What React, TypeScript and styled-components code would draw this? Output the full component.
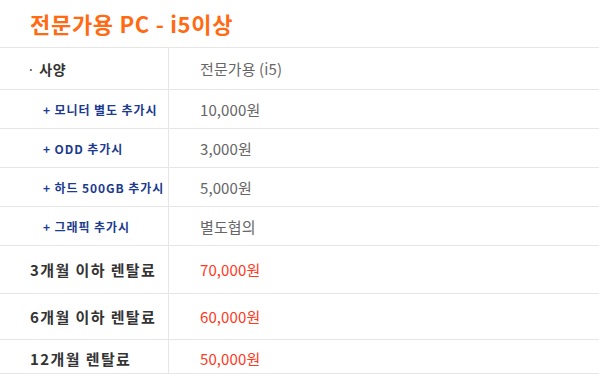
import React from 'react'
import styled, { createGlobalStyle } from 'styled-components'

const GlobalStyle = createGlobalStyle`
    body {
        margin: 0;
        background: #ffffff;
        font-family: "Noto Sans CJK KR", "Noto Sans", sans-serif;
    }
`

type Tone = 'spec' | 'option' | 'rent'

type Item = {
    label: string
    value: string
    tone: Tone
    height: number
}

const items: Item[] = [
    { label: '사양', value: '전문가용 (i5)', tone: 'spec', height: 41 },
    { label: '+ 모니터 별도 추가시', value: '10,000원', tone: 'option', height: 38 },
    { label: '+ ODD 추가시', value: '3,000원', tone: 'option', height: 38 },
    { label: '+ 하드 500GB 추가시', value: '5,000원', tone: 'option', height: 38 },
    { label: '+ 그래픽 추가시', value: '별도협의', tone: 'option', height: 38 },
    { label: '3개월 이하 렌탈료', value: '70,000원', tone: 'rent', height: 47 },
    { label: '6개월 이하 렌탈료', value: '60,000원', tone: 'rent', height: 45 },
    { label: '12개월 렌탈료', value: '50,000원', tone: 'rent', height: 33 },
]

export default function App(): JSX.Element {
    return (
        <Page>
            <GlobalStyle />
            <Title>전문가용 PC - i5이상</Title>
            <Table>
                {items.map(item => (
                    <Row key={item.label} style={{ height: item.height }}>
                        <Label tone={item.tone}>
                            {item.tone === 'spec' && <Dot>·</Dot>}
                            {item.label}
                        </Label>
                        <Value tone={item.tone}>{item.value}</Value>
                    </Row>
                ))}
            </Table>
        </Page>
    )
}

const Page = styled.div`
    width: 610px;
    height: 380px;
    overflow: hidden;
`

const Title = styled.h1`
    margin: 0;
    padding: 8px 0 0 30px;
    height: 38px;
    box-sizing: border-box;
    font-size: 22px;
    line-height: 30px;
    font-weight: bold;
    color: #ff6a12;
    letter-spacing: 0.7px;
`

const Table = styled.div`
    width: 599px;
    margin-top: 9px;
    border-top: 1px solid #e6e6e6;
`

const Row = styled.div`
    display: grid;
    grid-template-columns: 169px 1fr;
    border-bottom: 1px solid #e6e6e6;

    &:last-child > div {
        padding-top: 4px;
    }
`

const Label = styled.div<{ tone: Tone }>`
    display: flex;
    align-items: center;
    border-right: 1px solid #e6e6e6;
    font-weight: bold;
    padding-left: ${p => (p.tone === 'option' ? 43 : p.tone === 'spec' ? 27 : 30)}px;
    font-size: ${p => (p.tone === 'option' ? 12 : p.tone === 'spec' ? 14 : 15)}px;
    letter-spacing: ${p => (p.tone === 'option' ? 0.9 : p.tone === 'spec' ? 0.5 : 1.4)}px;
    color: ${p => (p.tone === 'option' ? '#1c3a8e' : '#333333')};
    white-space: nowrap;
`

const Dot = styled.span`
    margin-right: 4px;
    font-weight: normal;
    color: #555555;
`

const Value = styled.div<{ tone: Tone }>`
    display: flex;
    align-items: center;
    padding-left: 31px;
    font-size: 15px;
    letter-spacing: 0.1px;
    color: ${p => (p.tone === 'rent' ? '#ff3a1e' : '#666666')};
`
